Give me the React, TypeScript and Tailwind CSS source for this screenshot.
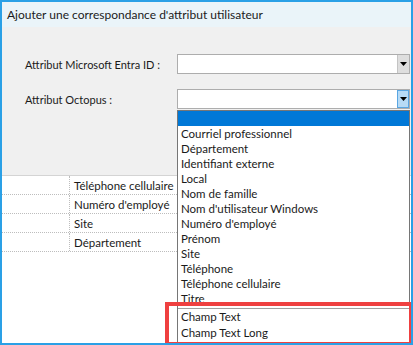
import React from "react";

const items = [
  "Courriel professionnel",
  "Département",
  "Identifiant externe",
  "Local",
  "Nom de famille",
  "Nom d'utilisateur Windows",
  "Numéro d'employé",
  "Prénom",
  "Site",
  "Téléphone",
  "Téléphone cellulaire",
  "Titre",
];

const gridRows = ["Téléphone cellulaire", "Numéro d'employé", "Site", "Département"];

function Arrow() {
  return (
    <svg width="7" height="4" viewBox="0 0 7 4">
      <path d="M0 0 H7 L3.5 4 Z" fill="#000" />
    </svg>
  );
}

export default function App() {
  return (
    <div
      className="w-[413px] h-[345px] border-2 border-[#2aa0e6] bg-white relative overflow-hidden flex flex-col text-[11.5px] leading-[15px] text-[#1a1a1a]"
      style={{ fontFamily: 'Lato, "Noto Sans", sans-serif' }}
    >
      <div className="h-[25px] shrink-0 bg-[#eaf4f9] flex items-center pl-[5px] text-[12px] text-[#1b1b1b]">
        Ajouter une correspondance d'attribut utilisateur
      </div>
      <div className="h-[149px] shrink-0 bg-[#f0f0f0] border-b border-[#d4d4d4] pt-[27px] flex flex-col gap-[15px]">
        <div className="flex items-center h-[20px]">
          <div className="w-[175px] pl-[23px] whitespace-nowrap text-[11px]">Attribut Microsoft Entra ID :</div>
          <div className="w-[233px] h-[20px] bg-white border border-[#adadad] flex justify-end">
            <div className="w-[12px] h-full bg-[#dedede] border-l border-[#c4c4c4] flex items-center justify-center">
              <Arrow />
            </div>
          </div>
        </div>
        <div className="flex items-center h-[20px]">
          <div className="w-[175px] pl-[23px] whitespace-nowrap text-[11px]">Attribut Octopus :</div>
          <div className="w-[233px] h-[20px] bg-white border border-[#adadad] flex justify-end">
            <div className="w-[12px] h-full bg-[#b7dbf6] border border-[#5aa6e2] flex items-center justify-center">
              <Arrow />
            </div>
          </div>
        </div>
      </div>
      <div className="flex flex-col">
        {gridRows.map((r) => (
          <div key={r} className="flex h-[19px] border-b border-dotted border-[#bdbdbd]">
            <div className="w-[68px] border-r border-dotted border-[#bdbdbd]" />
            <div className="pl-[4px] flex items-center whitespace-nowrap">{r}</div>
          </div>
        ))}
      </div>

      <div className="absolute left-[175px] top-[108px] w-[233px] h-[240px] bg-white border border-[#767676] flex flex-col">
        <div className="h-[15px] shrink-0 bg-[#0078d7]" />
        {items.map((it) => (
          <div key={it} className="h-[15px] shrink-0 pl-[3px] flex items-center whitespace-nowrap">
            {it}
          </div>
        ))}
        <div className="mt-[2px] border-t border-[#a0a0a0]" />
        <div className="h-[15px] shrink-0 pl-[3px] flex items-center">Champ Text</div>
        <div className="h-[16px] shrink-0 pl-[3px] flex items-center">Champ Text Long</div>
      </div>

      <div className="absolute left-[163px] top-[300px] w-[248px] h-[44px] border-4 border-[#ef4040]" />
    </div>
  );
}
